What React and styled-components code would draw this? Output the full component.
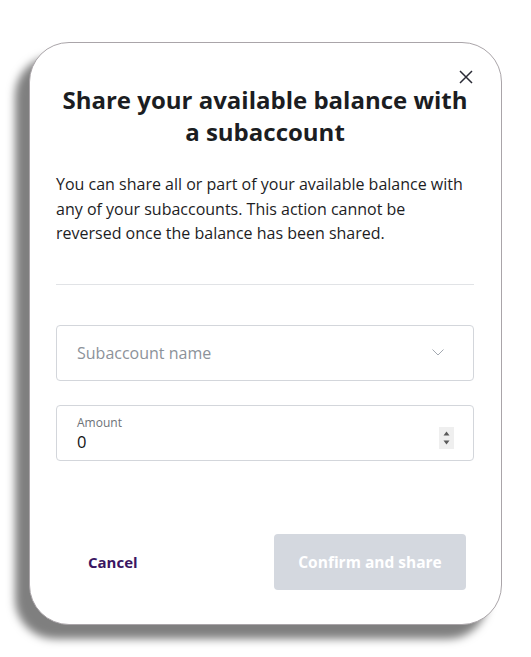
import React from "react";
import styled, { createGlobalStyle } from "styled-components";

const Global = createGlobalStyle`
  html, body { margin: 0; padding: 0; background: #ffffff; }
  body { font-family: "Open Sans", "Noto Sans", sans-serif; }
  * { box-sizing: border-box; }
`;

const Page = styled.div`
  width: 531px;
  height: 657px;
  padding: 42px 0 0 29px;
`;

const Card = styled.div`
  position: relative;
  width: 473px;
  height: 583px;
  background: #ffffff;
  border: 1px solid #aaa5a9;
  border-radius: 40px;
  box-shadow: -14px 14px 9px rgba(0, 0, 0, 0.5);
  padding: 41px 27px 34px 26px;
  display: flex;
  flex-direction: column;
`;

const Close = styled.button`
  position: absolute;
  top: 26px;
  right: 27px;
  width: 16px;
  height: 16px;
  padding: 0;
  border: 0;
  background: none;
  display: flex;
  align-items: center;
  justify-content: center;
  cursor: pointer;
`;

const Title = styled.h2`
  margin: 0;
  font-size: 24px;
  line-height: 32px;
  font-weight: 700;
  color: #1b1d22;
  text-align: center;
`;

const Text = styled.p`
  margin: 24px 0 0;
  font-size: 16px;
  line-height: 24.5px;
  color: #1d1d1f;
`;

const Divider = styled.hr`
  margin: 38px 0 0;
  border: 0;
  border-top: 1px solid #e1e3e6;
  height: 0;
`;

const Field = styled.div`
  margin-top: ${(p) => p.$gap}px;
  height: 56px;
  border: 1px solid #d3d6db;
  border-radius: 4px;
  padding: 0 20px;
  display: flex;
  align-items: center;
  justify-content: space-between;
`;

const Placeholder = styled.span`
  font-size: 16px;
  color: #8c929a;
`;

const InputCol = styled.div`
  display: flex;
  flex-direction: column;
  padding-top: 2px;
`;

const Label = styled.span`
  font-size: 12px;
  line-height: 16px;
  color: #6d7278;
`;

const Value = styled.span`
  font-size: 16.5px;
  line-height: 22px;
  color: #111214;
`;

const Spinner = styled.div`
  width: 15px;
  height: 22px;
  margin-top: 10px;
  margin-right: -1px;
  background: #efefef;
  display: flex;
  flex-direction: column;
  align-items: center;
  justify-content: center;
  gap: 4px;
`;

const Footer = styled.div`
  margin-top: auto;
  padding: 0 8px 0 8px;
  display: flex;
  align-items: center;
  justify-content: space-between;
`;

const CancelButton = styled.button`
  height: 56px;
  padding: 0 24px;
  border: 0;
  background: none;
  font-family: inherit;
  font-size: 15px;
  font-weight: 700;
  color: #3a1562;
  cursor: pointer;
`;

const ConfirmButton = styled.button`
  width: 192px;
  height: 56px;
  border: 0;
  border-radius: 4px;
  background: #d4d8df;
  font-family: inherit;
  font-size: 15.5px;
  font-weight: 700;
  color: #ffffff;
`;

export default function App() {
  return (
    <>
      <Global />
      <Page>
        <Card>
          <Close aria-label="Close">
            <svg width="14" height="14" viewBox="0 0 14 14">
              <path d="M1 1 L13 13 M13 1 L1 13" stroke="#2a2b36" strokeWidth="1.5" fill="none" />
            </svg>
          </Close>
          <Title>
            Share your available balance with
            <br />a subaccount
          </Title>
          <Text>
            You can share all or part of your available balance with any of your subaccounts. This
            action cannot be reversed once the balance has been shared.
          </Text>
          <Divider />
          <Field $gap={40}>
            <Placeholder>Subaccount name</Placeholder>
            <svg width="12" height="7" viewBox="0 0 12 7" style={{ marginRight: 9 }}>
              <path d="M0.5 0.5 L6 6 L11.5 0.5" stroke="#a3a9b1" strokeWidth="1" fill="none" />
            </svg>
          </Field>
          <Field $gap={24}>
            <InputCol>
              <Label>Amount</Label>
              <Value>0</Value>
            </InputCol>
            <Spinner>
              <svg width="7" height="5" viewBox="0 0 7 5">
                <path d="M3.5 0.5 L6.5 4.5 L0.5 4.5 Z" fill="#5a5a5a" />
              </svg>
              <svg width="7" height="5" viewBox="0 0 7 5">
                <path d="M0.5 0.5 L6.5 0.5 L3.5 4.5 Z" fill="#5a5a5a" />
              </svg>
            </Spinner>
          </Field>
          <Footer>
            <CancelButton>Cancel</CancelButton>
            <ConfirmButton disabled>Confirm and share</ConfirmButton>
          </Footer>
        </Card>
      </Page>
    </>
  );
}
